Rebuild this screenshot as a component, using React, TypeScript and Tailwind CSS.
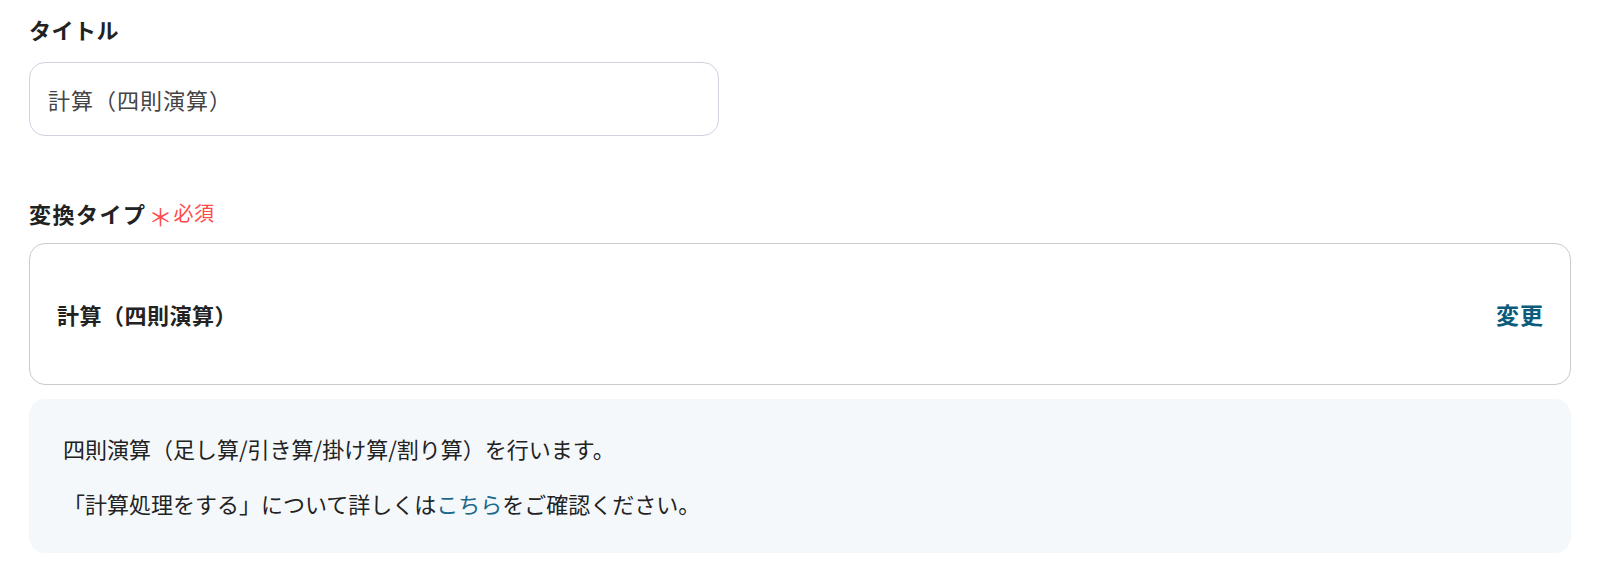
import React from 'react';

const font = { fontFamily: '"Noto Sans CJK JP", "Noto Sans", sans-serif' };

const App: React.FC = () => {
  return (
    <div className="min-h-screen bg-white pl-[29px] pr-[29px] pt-[15px] text-[#222222]" style={font}>
      {/* タイトル */}
      <div className="text-[22px] font-bold leading-[28px] tracking-[0.5px]">タイトル</div>
      <div className="mt-[19px] flex h-[74px] w-[690px] items-center rounded-2xl border border-[#d2d1e1] px-[18px]">
        <span className="text-[22px] tracking-[1px] text-[#444444]">計算（四則演算）</span>
      </div>

      {/* 変換タイプ */}
      <div className="mt-[63px] flex items-center leading-[28px]">
        <span className="text-[22px] font-bold tracking-[1.5px]">変換タイプ</span>
        <span className="ml-[2px] flex items-center gap-[1px] text-[#ff4b4b]">
          <span className="translate-y-[3px] text-[24px] leading-none">＊</span>
          <span className="text-[20px] tracking-[0.5px]">必須</span>
        </span>
      </div>
      <div className="mt-[16px] flex h-[142px] items-center justify-between rounded-2xl border border-[#cbcbcf] pl-[27px] pr-[26px]">
        <span className="text-[22px] font-bold tracking-[0.5px]">計算（四則演算）</span>
        <button className="text-[23px] font-bold tracking-[1px] text-[#0b5b7d]">変更</button>
      </div>

      {/* 説明 */}
      <div className="mt-[14px] flex h-[154px] flex-col justify-center gap-[30px] rounded-2xl bg-[#f5f8fb] pl-[34px]">
        <p className="text-[22px] leading-[25px]">四則演算（足し算/引き算/掛け算/割り算）を行います。</p>
        <p className="text-[22px] leading-[25px]">
          「計算処理をする」について詳しくは<a className="text-[#1b6a8c]">こちら</a>をご確認ください。
        </p>
      </div>
    </div>
  );
};

export default App;
